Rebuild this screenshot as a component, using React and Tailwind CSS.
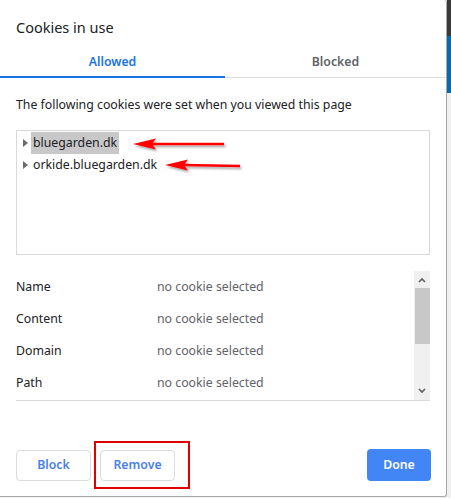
import React from "react";

const font = { fontFamily: '"Segoe UI", "Noto Sans", "Open Sans", sans-serif' };

function Arrow({ width, tilt }) {
  return (
    <svg width={width + 6} height="18" viewBox={`0 0 ${width + 6} 18`} className="overflow-visible">
      <defs>
        <filter id="sh" x="-20%" y="-50%" width="140%" height="200%">
          <feDropShadow dx="1.5" dy="2" stdDeviation="1.2" floodColor="#000" floodOpacity="0.35" />
        </filter>
      </defs>
      <g filter="url(#sh)">
        <line x1="20" y1="8" x2={width} y2={8 - tilt} stroke="#ff0000" strokeWidth="2.5" />
        <polygon points="1,8 24,2.5 20,8 24,13.5" fill="#ff0000" />
      </g>
    </svg>
  );
}

export default function App() {
  const rows = ["Name", "Content", "Domain", "Path"];
  return (
    <div className="flex w-[451px] h-[498px] bg-[#f0f0f0] overflow-hidden" style={font}>
      <div className="w-[447px] h-[497px] bg-white rounded-br-[3px] rounded-tr-[3px] border-r border-b border-[#a8a8a8] flex flex-col shrink-0">
        <div className="pl-4 pt-[17px] h-[47px] text-[14.5px] text-[#202124] leading-[20px]">Cookies in use</div>
        <div className="flex h-[31px] text-[12.3px] font-semibold">
          <div className="w-[225px] flex items-center justify-center text-[#1a73e8] border-b-2 border-[#1a73e8] pt-[1px]">Allowed</div>
          <div className="flex-1 flex items-center justify-center text-[#5f6368] border-b border-[#dadce0]">Blocked</div>
        </div>
        <div className="pl-4 pt-[17px] h-[52px] text-[12.3px] text-[#202124] leading-[20px]">The following cookies were set when you viewed this page</div>
        <div className="mx-4 h-[125px] border border-[#d9d9d9] pt-[1px] pl-[6px] text-[12.3px] text-[#202124]">
          <div className="flex items-center h-[22px]">
            <span className="w-0 h-0 border-y-[4px] border-y-transparent border-l-[5px] border-l-[#6b6b6b] mr-[3px]" />
            <span className="bg-[#c8c8c8] px-[2px] h-[22px] flex items-center">bluegarden.dk</span>
            <span className="ml-[13px] mt-[3px]"><Arrow width={92} tilt={0} /></span>
          </div>
          <div className="flex items-center h-[22px]">
            <span className="w-0 h-0 border-y-[4px] border-y-transparent border-l-[5px] border-l-[#6b6b6b] mr-[5px]" />
            <span className="h-[22px] flex items-center">orkide.bluegarden.dk</span>
            <span className="ml-[7px] mt-[1px]"><Arrow width={76} tilt={-1} /></span>
          </div>
        </div>
        <div className="mx-4 mt-[16px] h-[130px] border-b border-[#d9d9d9] flex">
          <div className="flex-1 text-[12.3px]">
            {rows.map((r) => (
              <div key={r} className="flex h-[32px] items-center">
                <div className="w-[141px] text-[#202124]">{r}</div>
                <div className="text-[#5f6368]">no cookie selected</div>
              </div>
            ))}
          </div>
          <div className="w-[16px] bg-[#f0f0f0] flex flex-col items-center">
            <svg width="16" height="17" viewBox="0 0 16 17"><path d="M5 11 L8 8 L11 11" stroke="#606060" strokeWidth="1.6" fill="none" /></svg>
            <div className="w-[15px] h-[56px] bg-[#c8c8c8]" />
            <div className="flex-1" />
            <svg width="16" height="17" viewBox="0 0 16 17"><path d="M5 6 L8 9 L11 6" stroke="#606060" strokeWidth="1.6" fill="none" /></svg>
          </div>
        </div>
        <div className="flex items-center mt-[40px] ml-4 mr-[15px] h-[48px]">
          <button className="w-[75px] h-[31px] border border-[#dadce0] rounded-[4px] text-[12.3px] font-semibold text-[#4a7fe8]">Block</button>
          <div className="ml-[3px] w-[96px] h-[48px] border-2 border-[#e00000] flex items-center pl-[4px]">
            <button className="w-[75px] h-[31px] border border-[#dadce0] rounded-[4px] text-[12.3px] font-semibold text-[#4a7fe8]">Remove</button>
          </div>
          <div className="flex-1" />
          <button className="w-[64px] h-[32px] rounded-[4px] bg-[#4285f4] text-white text-[12.3px] font-semibold">Done</button>
        </div>
      </div>
      <div className="flex flex-col w-[4px]">
        <div className="h-[36px] bg-[#3a3a3a]" />
        <div className="h-[57px] bg-[#0b68ad]" />
        <div className="flex-1 bg-[#f0f0f0]" />
      </div>
    </div>
  );
}
